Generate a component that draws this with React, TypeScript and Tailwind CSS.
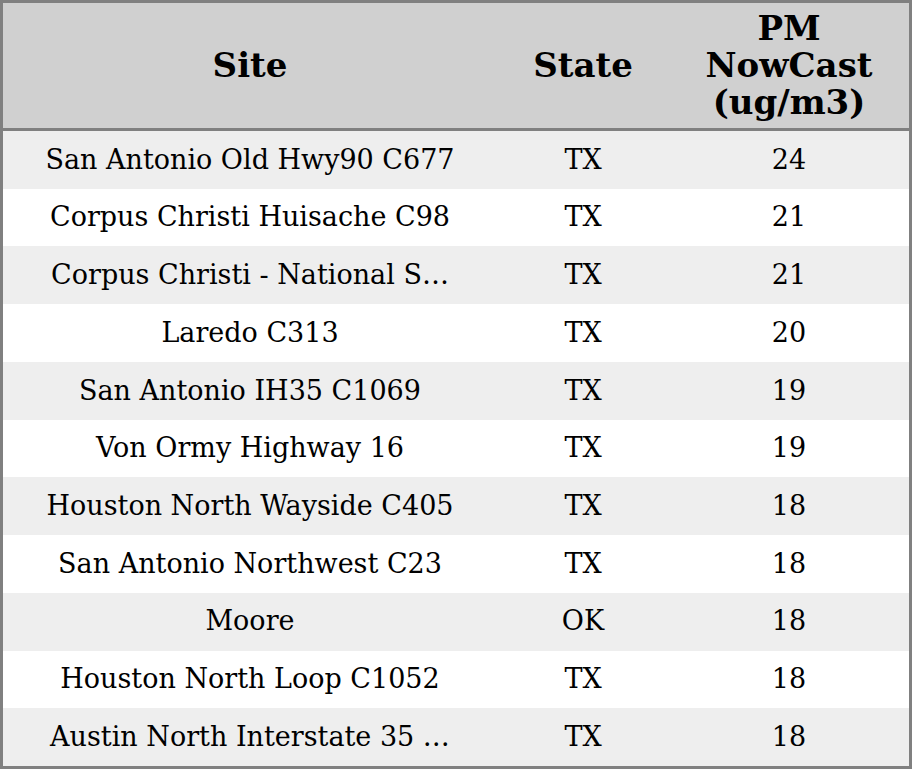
const rows: [string, string, number][] = [
  ["San Antonio Old Hwy90 C677", "TX", 24],
  ["Corpus Christi Huisache C98", "TX", 21],
  ["Corpus Christi - National S…", "TX", 21],
  ["Laredo C313", "TX", 20],
  ["San Antonio IH35 C1069", "TX", 19],
  ["Von Ormy Highway 16", "TX", 19],
  ["Houston North Wayside C405", "TX", 18],
  ["San Antonio Northwest C23", "TX", 18],
  ["Moore", "OK", 18],
  ["Houston North Loop C1052", "TX", 18],
  ["Austin North Interstate 35 …", "TX", 18],
];

export default function App() {
  return (
    <div className="h-[769px] w-[912px] bg-white font-['DejaVu_Serif',serif] text-black">
      <div className="flex h-full w-full flex-col border-[3px] border-[#808080]">
        <div className="flex h-[128px] shrink-0 items-center border-b-[3px] border-[#808080] bg-[#d0d0d0] text-[34px] font-bold leading-[37px]">
          <div className="w-[494px] text-center">Site</div>
          <div className="w-[172px] text-center">State</div>
          <div className="flex-1 text-center">
            PM
            <br />
            NowCast
            <br />
            (ug/m3)
          </div>
        </div>
        <div className="flex flex-1 flex-col text-[27px]">
          {rows.map(([site, state, pm], i) => (
            <div
              key={i}
              className={`flex flex-1 items-center ${i % 2 === 0 ? "bg-[#eeeeee]" : "bg-white"}`}
            >
              <div className="w-[494px] text-center whitespace-nowrap">{site}</div>
              <div className="w-[172px] text-center">{state}</div>
              <div className="flex-1 text-center">{pm}</div>
            </div>
          ))}
        </div>
      </div>
    </div>
  );
}
